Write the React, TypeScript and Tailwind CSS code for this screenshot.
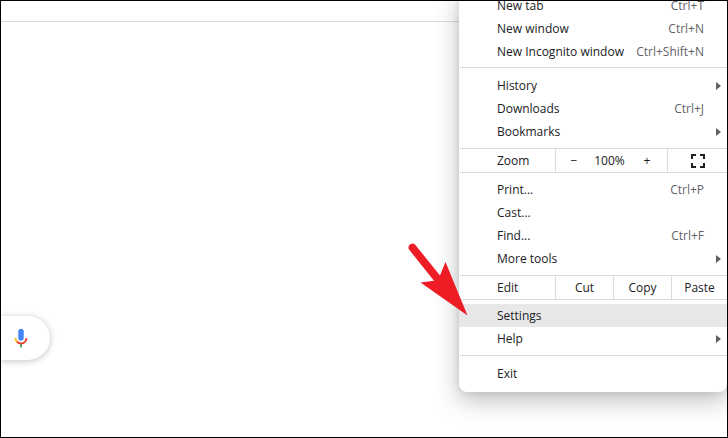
import type { ReactNode } from "react";

type Item = { label: string; shortcut?: string; submenu?: boolean; active?: boolean };

const windowItems: Item[] = [
  { label: "New tab", shortcut: "Ctrl+T" },
  { label: "New window", shortcut: "Ctrl+N" },
  { label: "New Incognito window", shortcut: "Ctrl+Shift+N" },
];

const libraryItems: Item[] = [
  { label: "History", submenu: true },
  { label: "Downloads", shortcut: "Ctrl+J" },
  { label: "Bookmarks", submenu: true },
];

const pageItems: Item[] = [
  { label: "Print...", shortcut: "Ctrl+P" },
  { label: "Cast..." },
  { label: "Find...", shortcut: "Ctrl+F" },
  { label: "More tools", submenu: true },
];

const settingsItems: Item[] = [
  { label: "Settings", active: true },
  { label: "Help", submenu: true },
];

function MenuItem({ label, shortcut, submenu, active }: Item) {
  return (
    <button
      className={`flex h-[23px] w-full items-center pl-[38px] text-left ${active ? "bg-[#e8e8e9]" : ""} ${submenu ? "pr-1.5" : "pr-[23px]"}`}
    >
      <span className="flex-1 whitespace-nowrap">{label}</span>
      {shortcut && <span className="whitespace-nowrap text-[#5f6368]">{shortcut}</span>}
      {submenu && (
        <svg width="5" height="8" viewBox="0 0 5 8" fill="#5f6063">
          <path d="M0 0L5 4L0 8Z" />
        </svg>
      )}
    </button>
  );
}

function MenuSection({ items, className }: { items: Item[]; className: string }) {
  return (
    <div className={className}>
      {items.map((item) => (
        <MenuItem key={item.label} {...item} />
      ))}
    </div>
  );
}

function Divider() {
  return <div className="ml-px h-px bg-[#dadce0]" />;
}

function ControlRow({ label, children }: { label: string; children: ReactNode }) {
  return (
    <div className="ml-px flex h-[25px] border-y border-[#dadce0]">
      <div className="flex w-[95px] items-center pl-[37px]">{label}</div>
      {children}
    </div>
  );
}

function MicIcon() {
  return (
    <svg width="22" height="22" viewBox="0 0 24 24" aria-hidden="true">
      <path fill="#4285f4" d="M12 15c1.66 0 3-1.31 3-2.97V4.97C15 3.34 13.66 2 12 2S9 3.34 9 4.97v7.06C9 13.69 10.34 15 12 15z" />
      <path fill="#34a853" d="M11 18.08h2V22h-2z" />
      <path fill="#fbbc05" d="M7.05 16.87C5.78 15.61 5 13.91 5 12h2c0 1.45.56 2.42 1.47 3.38v.32l-1.15 1.18z" />
      <path fill="#ea4335" d="M12 16.93a4.97 5.25 0 0 1-3.54-1.55l-1.41 1.49C8.32 18.16 10.03 19 12 19c3.87 0 6.99-3.14 6.99-7h-1.99c0 2.92-2.24 4.93-5 4.93z" />
    </svg>
  );
}

function BrowserMenu() {
  return (
    <nav className="absolute -top-[7px] right-0 w-[268px] rounded-b-lg bg-white text-xs text-[#202124] shadow-[0_8px_24px_rgba(60,64,67,0.35),0_0_6px_rgba(60,64,67,0.12)]">
      <MenuSection items={windowItems} className="pb-1" />
      <Divider />
      <MenuSection items={libraryItems} className="pt-1.5 pb-[5px]" />
      <ControlRow label="Zoom">
        <div className="flex w-[112px] items-center border-l border-[#dadce0]">
          <button className="w-9" aria-label="Zoom out">−</button>
          <span className="flex-1 text-center">100%</span>
          <button className="w-10" aria-label="Zoom in">+</button>
        </div>
        <button className="flex flex-1 items-center justify-center border-l border-[#dadce0]" aria-label="Full screen">
          <svg width="14" height="14" viewBox="0 0 14 14" fill="none" stroke="#202124" strokeWidth="2">
            <path d="M1 5V1H5M9 1H13V5M13 9V13H9M5 13H1V9" />
          </svg>
        </button>
      </ControlRow>
      <MenuSection items={pageItems} className="py-[5px]" />
      <ControlRow label="Edit">
        <button className="w-[58px] border-l border-[#dadce0]">Cut</button>
        <button className="w-[58px] border-l border-[#dadce0]">Copy</button>
        <button className="flex-1 border-l border-[#dadce0]">Paste</button>
      </ControlRow>
      <MenuSection items={settingsItems} className="pt-1 pb-[5px]" />
      <Divider />
      <MenuSection items={[{ label: "Exit" }]} className="pt-1.5 pb-[7px]" />
    </nav>
  );
}

export default function App() {
  return (
    <div className="relative h-screen overflow-hidden border border-black bg-white font-['Open_Sans','Noto_Sans',sans-serif]">
      <header className="h-[21px] border-b border-[#dadada]" />
      <main className="pt-[294px]">
        <button
          className="flex h-11 w-[49px] items-center rounded-r-full bg-white pl-[9px] shadow-[0_1px_6px_rgba(32,33,36,0.28)]"
          aria-label="Search by voice"
        >
          <MicIcon />
        </button>
      </main>
      <BrowserMenu />
      {/* Pointer to the Settings entry */}
      <svg className="absolute top-[240px] left-[405px]" width="64" height="78" viewBox="406 241 64 78" fill="#ee1c25" aria-hidden="true">
        <path d="M415 244.5L440 275.5L445.5 262L467.5 315.5L420.5 282.5L434 280.7L409 249.5A4 4 0 0 1 415 244.5Z" />
      </svg>
    </div>
  );
}
